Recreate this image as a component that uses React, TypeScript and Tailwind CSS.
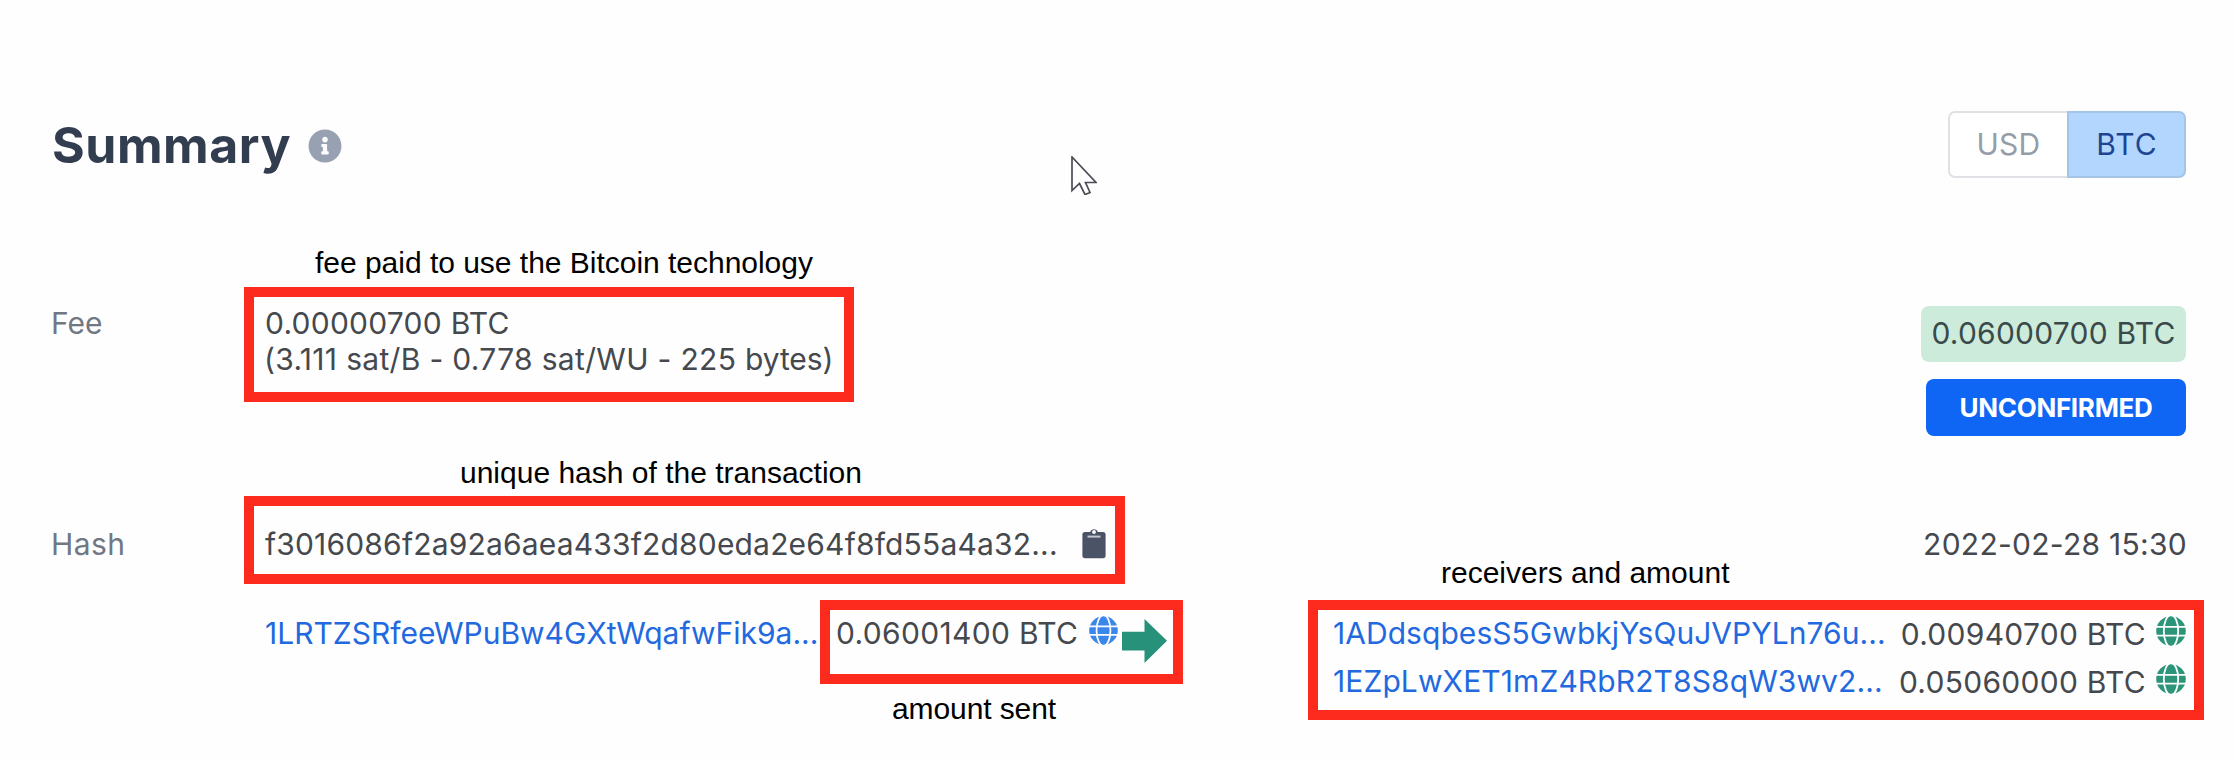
import React from 'react';
import { FaInfoCircle } from 'react-icons/fa';

function Globe({ className }: { className: string }) {
  return (
    <svg viewBox="0 0 30 30" className={className}>
      <circle cx="15" cy="15" r="14.8" fill="currentColor" />
      <g fill="none" stroke="#fefefe" strokeWidth="1.8">
        <ellipse cx="15" cy="15" rx="7.2" ry="16" />
        <path d="M0 10.800h30M0 19.600h30" />
      </g>
    </svg>
  );
}

function Clipboard() {
  return (
    <svg viewBox="0 0 24 31" className="h-[31px] w-6 text-[#4b5366]">
      <path
        fill="currentColor"
        d="M3 4h5.200a4 4 0 0 1 7.600 0H21a2.600 2.600 0 0 1 2.600 2.600v21A2.600 2.600 0 0 1 21 30.200H3A2.600 2.600 0 0 1 .4 27.600v-21A2.600 2.600 0 0 1 3 4z"
      />
      <circle cx="12" cy="4" r="1.900" fill="#fefefe" />
      <path d="M5.500 8.600h13" stroke="#c3c7cf" strokeWidth="2" />
    </svg>
  );
}

function Arrow() {
  return (
    <svg viewBox="0 0 45 44" className="mt-1 h-11 w-[45px] shrink-0">
      <path d="M0 12.700h22.500V0L45 21.800 22.500 44V31.500H0z" fill="#27917a" />
    </svg>
  );
}

function Output({ address, amount, tracking }: { address: string; amount: string; tracking: string }) {
  return (
    <div className="flex h-9 w-[853px] justify-between">
      <span className={`text-[#2269df] ${tracking}`}>{address}</span>
      <span className="flex">
        <span className="mt-px tracking-[0.28px]">{amount}</span>
        <Globe className="mt-px ml-2.5 size-[30px] text-[#2c9478]" />
      </span>
    </div>
  );
}

function Note({ className, children }: { className: string; children: string }) {
  return (
    <p className={`absolute font-['Liberation_Sans',sans-serif] whitespace-nowrap text-black ${className}`}>
      {children}
    </p>
  );
}

export default function App() {
  return (
    <main className="relative h-[762px] w-[2236px] overflow-hidden bg-[#fefefe] pt-[111px] pr-[50px] pl-[51px] font-['Inter',sans-serif] text-[30px] leading-9 whitespace-nowrap text-[#45484d]">
      <header className="flex h-[67px] items-start justify-between">
        <div className="flex items-center">
          <h1 className="mt-1 ml-px text-[50px] leading-[60px] font-bold tracking-[0.53px] text-[#323d4f]">Summary</h1>
          <FaInfoCircle className="mt-[5px] ml-[17px] size-[34px] text-[#98a1b2]" />
        </div>
        <div className="flex h-[67px] w-[238px]">
          <div className="flex flex-1 items-center justify-center rounded-l-[7px] border-2 border-r-0 border-[#dfe1e4] bg-white pb-0.5 tracking-[0.2px] text-[#959da8]">
            USD
          </div>
          <div className="flex w-[119px] items-center justify-center rounded-r-[7px] border-2 border-[#a5c5e6] bg-[#b2d6fe] pb-0.5 pl-px tracking-[1px] text-[#1e4591]">
            BTC
          </div>
        </div>
      </header>

      <section className="mt-[127px] flex h-[132px]">
        <div className="w-[214px] text-[#717783]">Fee</div>
        <div className="flex-1">
          <p className="tracking-[0.25px]">0.00000700 BTC</p>
          <p className="-ml-px tracking-[0.32px]">
            (3.111 sat/B - 0.778 sat/WU - 225 <span className="tracking-[-0.1px]">bytes)</span>
          </p>
        </div>
        <div className="flex flex-col items-end pt-px">
          <div className="flex h-[56px] w-[265px] items-center justify-center rounded-lg bg-[#cdebda] pb-0.5 tracking-[0.23px] text-[#3a4a4a]">
            0.06000700 BTC
          </div>
          <div className="mt-[17px] flex h-[57px] w-[260px] items-center justify-center rounded-lg bg-[#0f66f5] text-[26px] font-bold tracking-[-0.3px] text-white">
            UNCONFIRMED
          </div>
        </div>
      </section>

      <section className="mt-[88px] flex h-9">
        <div className="mt-px w-[214px] tracking-[0.4px] text-[#717783]">Hash</div>
        <div className="flex flex-1">
          <span className="mt-px tracking-[0.18px]">f3016086f2a92a6aea433f2d80eda2e64f8fd55a4a32...</span>
          <span className="mt-[3px] ml-6">
            <Clipboard />
          </span>
        </div>
        <div className="mt-px -mr-px tracking-[0.28px]">2022-02-28 15:30</div>
      </section>

      <section className="mt-[54px] flex justify-between pl-[214px]">
        <div className="flex">
          <span className="w-[571px] text-[#2269df]">1LRTZSRfeeWPuBw4GXtWqafwFik9a...</span>
          <span className="w-[253px] tracking-[0.33px]">0.06001400 BTC</span>
          <Globe className="mt-px size-[29px] text-[#3b86ea]" />
          <span className="ml-1">
            <Arrow />
          </span>
        </div>
        <div className="flex flex-col gap-3">
          <Output
            address="1ADdsqbesS5GwbkjYsQuJVPYLn76u..."
            amount="0.00940700 BTC"
            tracking="tracking-[0.05px]"
          />
          <Output
            address="1EZpLwXET1mZ4RbR2T8S8qW3wv2..."
            amount="0.05060000 BTC"
            tracking="tracking-[0.1px]"
          />
        </div>
      </section>

      <div className="absolute top-[287px] left-[244px] h-[115px] w-[610px] border-[10px] border-[#fc2b1e]" />
      <div className="absolute top-[496px] left-[244px] h-[88px] w-[881px] border-[10px] border-[#fc2b1e]" />
      <div className="absolute top-[600px] left-[820px] h-[84px] w-[363px] border-[10px] border-[#fc2b1e]" />
      <div className="absolute top-[600px] left-[1308px] h-[120px] w-[896px] border-[10px] border-[#fc2b1e]" />

      <Note className="top-[245px] left-[315px] tracking-[-0.02px]">fee paid to use the Bitcoin technology</Note>
      <Note className="top-[455px] left-[460px]">unique hash of the transaction</Note>
      <Note className="top-[691px] left-[892px] tracking-[-0.1px]">amount sent</Note>
      <Note className="top-[555px] left-[1441px]">receivers and amount</Note>

      <svg viewBox="0 0 26 39" className="absolute top-[156px] left-[1071px] h-[39px] w-[26px]">
        <path
          d="M1 1v33.500l7.500-7 5.500 11 5-2-4.500-10H25z"
          fill="#fefefe"
          stroke="#4d4b55"
          strokeWidth="1.700"
        />
      </svg>
    </main>
  );
}
